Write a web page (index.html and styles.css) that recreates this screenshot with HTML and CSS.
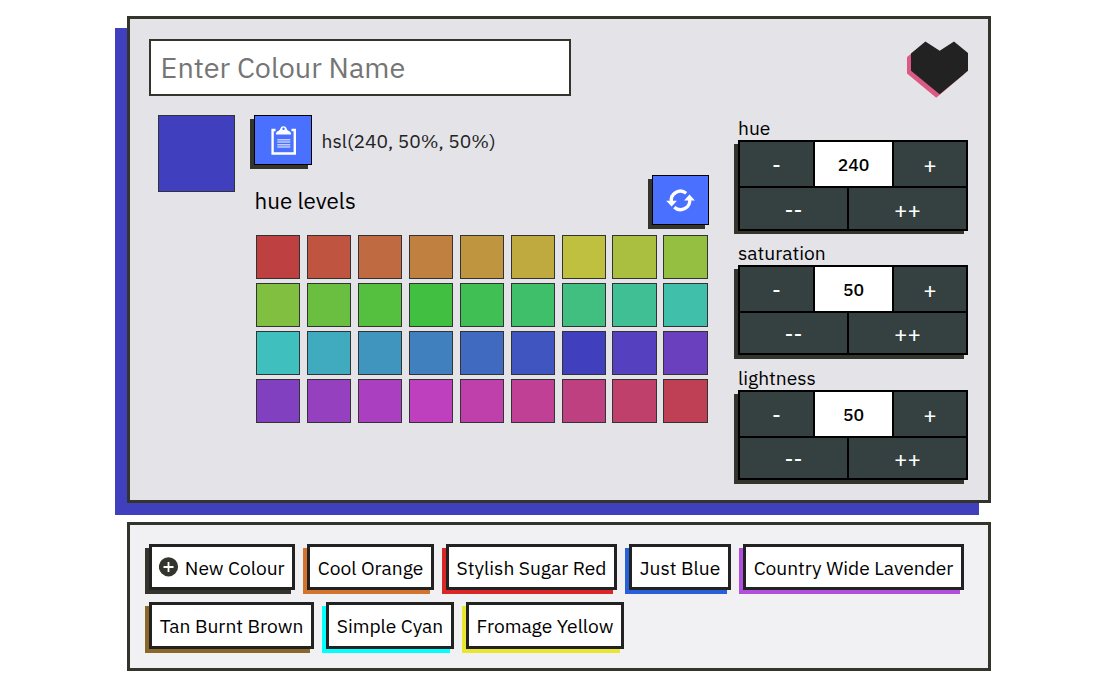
FILE: index.html
```html
<!DOCTYPE html>
<html lang="en">
<head>
<meta charset="utf-8">
<title>Colour Picker</title>
<link rel="stylesheet" href="styles.css">
</head>
<body>
<main class="page">
  <section class="picker">
    <div class="editor">
      <input class="name-input" type="text" placeholder="Enter Colour Name">
      <div class="details">
        <div class="swatch"></div>
        <div class="levels">
          <div class="code-row">
            <button class="icon-button" aria-label="Copy">
              <svg width="56" height="48" viewBox="255 116 56 48">
                <path d="M275.500 130H272.6V153.5H294.8V130H291.500" fill="none" stroke="#fff" stroke-width="2.4"/>
                <path fill="#fff" fill-rule="evenodd" d="M276 134.500v-1.400c1.500-2.600 3.800-2 4.300-4.300a3.300 3.300 0 0 1 6.400 0c.5 2.300 2.800 1.700 4.300 4.300v1.400zM283.500 127.600a1.200 1.200 0 1 0 .01 0z"/>
                <path d="M277.300 139.800h13M277.300 142h13M277.300 144.700h13M277.300 147h13" stroke="#fff" stroke-opacity=".65" stroke-width="1.500"/>
              </svg>
            </button>
            <span class="code">hsl(240, 50%, 50%)</span>
          </div>
          <div class="levels-head">
            <h2 class="levels-title">hue levels</h2>
            <button class="icon-button refresh" aria-label="Switch levels">
              <svg width="55" height="48" viewBox="653 176 55 48">
                <path d="M671.400 202A9.200 9.200 0 0 1 686.200 193.200M689.600 199A9.200 9.200 0 0 1 674.300 207.200" fill="none" stroke="#fff" stroke-width="3.300"/>
                <path d="M666.200 200.700h10.800l-5.400 5.800zM684.100 200.400h10.800l-5.400-5.900z" fill="#fff"/>
              </svg>
            </button>
          </div>
          <div class="grid" id="grid"></div>
        </div>
      </div>
    </div>
    <aside class="controls">
      <svg class="heart" width="62" height="58" viewBox="907 41 62 58">
        <path d="M907 57L921.500 45.500L936 54.500L950 45.500L964 57V74.300L936.200 97.700L907 73.500z" fill="#db5a85"/>
        <path d="M911 53.500L925.400 41.400L939.700 50.800L954 41.400L968 53V70.700L939.700 94.200L911 70.700z" fill="#222"/>
      </svg>
      <div class="control control-hue">
        <label class="control-label">hue</label>
        <div class="stepper"><div class="keys">
          <button class="key">-</button><output class="value">240</output><button class="key">+</button>
          <button class="key double-minus">--</button><button class="key double-plus">++</button>
        </div></div>
      </div>
      <div class="control">
        <label class="control-label">saturation</label>
        <div class="stepper"><div class="keys">
          <button class="key">-</button><output class="value">50</output><button class="key">+</button>
          <button class="key double-minus">--</button><button class="key double-plus">++</button>
        </div></div>
      </div>
      <div class="control">
        <label class="control-label">lightness</label>
        <div class="stepper"><div class="keys">
          <button class="key">-</button><output class="value">50</output><button class="key">+</button>
          <button class="key double-minus">--</button><button class="key double-plus">++</button>
        </div></div>
      </div>
    </aside>
  </section>
  <section class="saved">
    <button class="chip new"><svg width="20" height="20" viewBox="0 0 20 20"><circle cx="9.500" cy="9.800" r="9.600" fill="#33352d"/><path d="M9.500 5v10M4.500 10h10" stroke="#fff" stroke-width="1.800"/></svg><span>New Colour</span></button>
    <button class="chip orange">Cool Orange</button>
    <button class="chip red">Stylish Sugar Red</button>
    <button class="chip blue">Just Blue</button>
    <button class="chip lavender">Country Wide Lavender</button>
    <button class="chip brown">Tan Burnt Brown</button>
    <button class="chip cyan">Simple Cyan</button>
    <button class="chip yellow">Fromage Yellow</button>
  </section>
</main>
<script src="script.js"></script>
</body>
</html>
```
FILE: styles.css
```css
* { box-sizing: border-box; }
body { margin: 0; background: #fff; color: #000; font-family: "IBM Plex Sans", Roboto, sans-serif; }
button { margin: 0; padding: 0; font: inherit; color: inherit; border-radius: 0; }
svg { display: block; }

.page { width: 864px; margin: 16px auto 0 127px; }

.picker {
  display: flex;
  gap: 29px;
  height: 487px;
  padding: 20px 19px;
  background: #e4e3e8;
  border: 3px solid #33352d;
  box-shadow: -12px 12px #4040bf;
}
.editor { width: 560px; }
.name-input {
  display: block;
  width: 422px;
  height: 57px;
  padding: 0 9.600px 2px;
  border: 2px solid #33352d;
  border-radius: 0;
  background: #fff;
  font: 28.800px "IBM Plex Sans", Roboto, sans-serif;
}
.name-input::placeholder { color: #757575; opacity: 1; }
.details { display: flex; gap: 19px; margin-top: 19px; padding-left: 9px; }
.swatch { width: 77px; height: 77px; flex: none; background: #4040bf; border: 1px solid #333; }
.levels { width: 455px; }
.code-row { display: flex; align-items: center; gap: 9.600px; }
.code { font-size: 19.200px; color: #222; }
.icon-button {
  width: 58px;
  height: 50px;
  background: #4a70ff;
  border: 1px solid #000;
  box-shadow: -4px 4px #33352d;
}
.refresh { width: 57px; }
.levels-head { display: flex; justify-content: space-between; align-items: center; margin-top: 10px; }
.levels-title { margin: 0 0 0 .500px; font-size: 22.400px; font-weight: 400; }
.grid {
  display: grid;
  grid-template-columns: repeat(9, 44.200px);
  grid-auto-rows: 44px;
  gap: 4px 6.720px;
  margin: 10px 0 0 2.100px;
}
.cell { border: 1px solid #333; }

.controls { display: flex; flex-direction: column; width: 230px; }
.heart { flex: none; margin: 2px -1px 0 auto; }
.control { height: 125px; flex: none; }
.control-hue { margin-top: 16px; }
.control-label { display: block; height: 25px; font-size: 19.200px; line-height: 25px; }
.stepper { height: 90px; box-shadow: -4px 4px #33352d; }
.keys {
  display: flex;
  flex-wrap: wrap;
  gap: 2px;
  height: 90px;
  padding: 2px;
  background: #000;
}
.control-hue .keys { height: 91px; }
.key { width: 73px; height: 44px; border: 0; background: #354040; color: #fff; font-size: 22.400px; }
.value + .key { width: 72px; }
.value { width: 77px; height: 44px; background: #fff; font-size: 17.600px; font-weight: 500; line-height: 45px; text-align: center; }
.double-minus, .double-plus { height: 40px; }
.double-minus { width: 107px; }
.double-plus { width: 117px; }
.control-hue .double-minus, .control-hue .double-plus { height: 41px; padding-top: 1px; }

.saved {
  display: flex;
  flex-wrap: wrap;
  align-content: flex-start;
  gap: 12px;
  height: 149px;
  margin-top: 19px;
  padding: 18.600px 19px;
  background: #f1f0f3;
  border: 3px solid #33352d;
}
.chip {
  height: 46.600px;
  padding-top: 1px;
  background: #fff;
  border: 3px solid #222;
  font-size: 19.200px;
  white-space: nowrap;
}
.new { display: flex; align-items: center; justify-content: center; gap: 5.500px; width: 146px; box-shadow: -4px 4px #33352d; }
.orange { width: 127px; box-shadow: -4px 4px #d4732d; }
.red { width: 171px; box-shadow: -4px 4px #d92626; }
.blue { width: 102px; box-shadow: -4px 4px #2661d9; }
.lavender { width: 221px; box-shadow: -4px 4px #b04fde; }
.brown { width: 165px; box-shadow: -4px 4px #8b6829; }
.cyan { width: 128px; box-shadow: -4px 4px #00ffff; }
.yellow { width: 158px; box-shadow: -4px 4px #e9e62f; }
```
FILE: script.js
```js
const grid = document.getElementById("grid");
for (let hue = 0; hue < 360; hue += 10) {
  const cell = document.createElement("div");
  cell.className = "cell";
  cell.style.backgroundColor = `hsl(${hue}, 50%, 50%)`;
  grid.append(cell);
}
```
